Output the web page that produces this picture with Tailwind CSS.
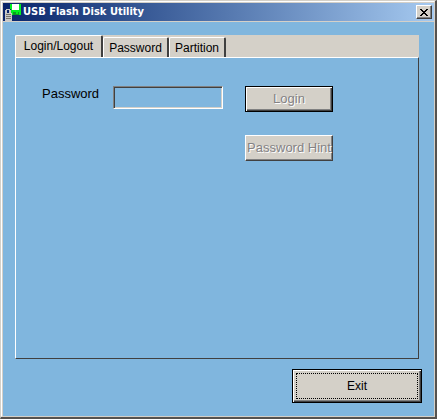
<!DOCTYPE html>
<html lang="en">
<head>
    <meta charset="UTF-8">
    <title>USB Flash Disk Utility</title>
    <meta name="viewport" content="width=device-width, initial-scale=1.0">
    <script src="https://cdn.jsdelivr.net/npm/@tailwindcss/browser@4"></script>
</head>
<body class="bg-[#d4d0c8] font-['Liberation_Sans',Arial,sans-serif] text-[12px] leading-4 text-black">
    <!-- Window frame -->
    <div class="min-h-screen flex flex-col border-t border-l border-t-[#d4d0c8] border-l-[#d4d0c8] border-r-2 border-b-2 border-r-[#55524f] border-b-[#55524f]">
        <div class="grow flex flex-col border border-t-white border-l-white border-r-[#d4d0c8] border-b-[#d4d0c8]">
            <div class="grow flex flex-col border-t border-l border-[#d4d0c8] bg-[#80b6de]">

                <!-- Title bar -->
                <header class="h-[19px] flex items-center pl-[2px] pr-[2px] border-b border-[#d4d0c8] bg-linear-to-r from-[#0a246a] to-[#a6caf0]">
                    <svg class="w-4 h-[17px] shrink-0" viewBox="0 0 16 17" shape-rendering="crispEdges" aria-hidden="true">
                        <path fill="#00f020" d="M5 0h11v11H5z"/>
                        <path fill="#fff" d="M7 0h7v6H7z"/>
                        <path fill="#0b9a20" d="M8 8h6v3H8z"/>
                        <path fill="#00f020" d="M11 8h2v2h-2z"/>
                        <path fill="#0a246a" d="M0 5h6v6H0z"/>
                        <path fill="#c8c8c8" d="M1 5h4v1H1zM0 6h2v4H0zM4 6h2v4H4zM0 9h7v8H0z"/>
                        <path fill="#77756c" d="M1 10h5v1H1zM1 12h5v1H1zM1 14h5v1H1z"/>
                    </svg>
                    <h1 class="grow pl-[2px] font-['DejaVu_Sans_Condensed','DejaVu_Sans',Tahoma,sans-serif] font-stretch-condensed font-bold text-[11px] text-white whitespace-nowrap">USB Flash Disk Utility</h1>
                    <button type="button" aria-label="Close" class="w-4 h-[14px] flex items-center justify-center bg-[#d4d0c8] border border-t-white border-l-white border-r-[#404040] border-b-[#404040] shadow-[inset_-1px_-1px_#808080]">
                        <svg class="w-2 h-[7px]" viewBox="0 0 8 7" shape-rendering="crispEdges" aria-hidden="true">
                            <path d="M0 0h2v1h1v1h2V1h1V0h2v1H7v1H6v1H5v1h1v1h1v1h1v1H6V6H5V5H3v1H2v1H0V6h1V5h1V4h1V3H2V2H1V1H0z"/>
                        </svg>
                    </button>
                </header>

                <main class="grow flex flex-col pl-3 pr-[15px] pt-[13px] pb-[13px]">
                    <!-- Tabs -->
                    <div role="tablist" class="h-[22px] flex items-end bg-[#d4d0c8]">
                        <button type="button" role="tab" aria-selected="true" class="h-[22px] w-[88px] pb-[2px] whitespace-nowrap border-t border-l border-white border-r-2 border-r-[#404040] rounded-t-[2px]">Login/Logout</button>
                        <button type="button" role="tab" aria-selected="false" class="h-5 w-[66px] border-t border-l border-white border-r-2 border-r-[#404040] rounded-t-[2px]">Password</button>
                        <button type="button" role="tab" aria-selected="false" class="h-5 w-[57px] border-t border-l border-white border-r-2 border-r-[#404040] rounded-t-[2px]">Partition</button>
                    </div>

                    <!-- Login page -->
                    <div role="tabpanel" class="grow flex items-start border border-t-white border-l-white border-r-[#404040] border-b-[#404040] pl-[26px] pt-7">
                        <label for="password" class="w-[71px] text-[13px]">Password</label>
                        <input id="password" type="password" class="w-[110px] h-[23px] px-1 bg-transparent outline-none border border-t-[#808080] border-l-[#808080] border-b-white border-r-white shadow-[inset_1px_1px_#404040,inset_-1px_-1px_#d4d0c8]">
                        <div class="ml-[22px] w-[88px] flex flex-col gap-[23px] text-[13px]">
                            <button type="button" disabled class="h-[26px] bg-[#d4d0c8] text-[#848284] border border-black whitespace-nowrap text-shadow-[1px_1px_#fff] shadow-[inset_1px_1px_#fff,inset_-1px_-1px_#404040,inset_-2px_-2px_#808080]">Login</button>
                            <button type="button" disabled class="h-[26px] bg-[#d4d0c8] text-[#848284] border border-t-white border-l-white border-r-[#404040] border-b-[#404040] whitespace-nowrap text-shadow-[1px_1px_#fff] shadow-[inset_-1px_-1px_#808080]">Password Hint</button>
                        </div>
                    </div>
                    <button type="button" class="self-end mt-[10px] -mr-[3px] w-[130px] h-[34px] p-[3px] bg-[#d4d0c8] border border-black shadow-[inset_1px_1px_#fff,inset_-1px_-1px_#404040,inset_-2px_-2px_#808080]">
                        <span class="h-full flex items-center justify-center border border-dotted border-black">Exit</span>
                    </button>
                </main>
            </div>
        </div>
    </div>
</body>
</html>
